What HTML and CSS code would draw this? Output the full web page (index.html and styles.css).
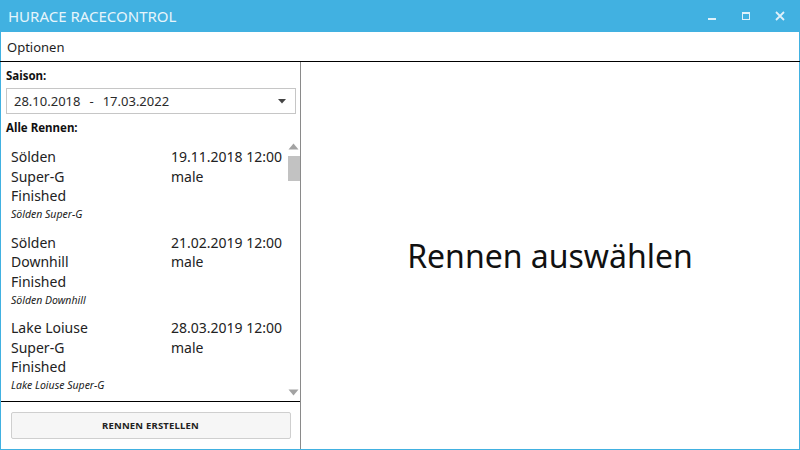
FILE: index.html
```html
<!DOCTYPE html>
<html>
<head>
<meta charset="utf-8">
<link rel="stylesheet" href="styles.css">
</head>
<body>
<div class="window">
  <div class="titlebar">
    <span class="title">HURACE RACECONTROL</span>
    <div class="controls">
      <svg class="ctl" width="10" height="10" viewBox="0 0 10 10"><rect x="1" y="7" width="8" height="2" fill="#dff1fa"/></svg>
      <svg class="ctl" width="10" height="10" viewBox="0 0 10 10"><rect x="1.5" y="1.5" width="7" height="7" fill="none" stroke="#dff1fa" stroke-width="1"/><rect x="1" y="1" width="8" height="2" fill="#dff1fa"/></svg>
      <svg class="ctl" width="10" height="10" viewBox="0 0 10 10"><path d="M1 1 L9 9 M9 1 L1 9" stroke="#dff1fa" stroke-width="1.8"/></svg>
    </div>
  </div>
  <div class="menubar"><span class="menuitem">Optionen</span></div>
  <div class="main">
    <div class="left">
      <div class="filters">
        <div class="label">Saison:</div>
        <div class="combo">
          <span class="range"><span>28.10.2018</span><span class="dash">-</span><span>17.03.2022</span></span>
          <svg width="8" height="5" viewBox="0 0 8 5"><path d="M0 0 L8 0 L4 4.5 Z" fill="#444"/></svg>
        </div>
        <div class="label label2">Alle Rennen:</div>
      </div>
      <div class="listarea">
        <div class="items">
          <div class="item">
            <div class="row"><span class="c1">Sölden</span><span class="c2">19.11.2018 12:00</span></div>
            <div class="row"><span class="c1">Super-G</span><span class="c2">male</span></div>
            <div class="row"><span class="c1">Finished</span></div>
            <div class="desc">Sölden Super-G</div>
          </div>
          <div class="item">
            <div class="row"><span class="c1">Sölden</span><span class="c2">21.02.2019 12:00</span></div>
            <div class="row"><span class="c1">Downhill</span><span class="c2">male</span></div>
            <div class="row"><span class="c1">Finished</span></div>
            <div class="desc">Sölden Downhill</div>
          </div>
          <div class="item">
            <div class="row"><span class="c1">Lake Loiuse</span><span class="c2">28.03.2019 12:00</span></div>
            <div class="row"><span class="c1">Super-G</span><span class="c2">male</span></div>
            <div class="row"><span class="c1">Finished</span></div>
            <div class="desc">Lake Loiuse Super-G</div>
          </div>
        </div>
        <div class="scrollbar">
          <svg class="arrow" width="13" height="9" viewBox="0 0 13 9"><path d="M1.5 7.5 L11.5 7.5 L6.5 1.5 Z" fill="#a3a3a3"/></svg>
          <div class="track"><div class="thumb"></div></div>
          <svg class="arrow" width="13" height="9" viewBox="0 0 13 9"><path d="M1.5 1.5 L11.5 1.5 L6.5 7.5 Z" fill="#a3a3a3"/></svg>
        </div>
      </div>
      <div class="footer">
        <div class="button">RENNEN ERSTELLEN</div>
      </div>
    </div>
    <div class="right">
      <div class="placeholder">Rennen auswählen</div>
    </div>
  </div>
</div>
</body>
</html>
```
FILE: styles.css
```css
html, body {
  margin: 0;
  padding: 0;
}
body {
  width: 800px;
  height: 450px;
  overflow: hidden;
  font-family: "Noto Sans", "Open Sans", sans-serif;
  color: #1e1e1e;
  background: #fff;
}
.window {
  box-sizing: border-box;
  width: 800px;
  height: 450px;
  border: 1px solid #41b1e1;
  border-top: none;
  display: flex;
  flex-direction: column;
}
.titlebar {
  height: 32px;
  background: #41b1e1;
  margin: 0 -1px;
  display: flex;
  align-items: center;
  justify-content: space-between;
  padding: 0 0 0 8px;
}
.title {
  color: #e6f5fb;
  font-size: 15px;
}
.controls {
  display: flex;
  align-items: center;
  height: 32px;
}
.ctl {
  margin-left: 24px;
}
.ctl:last-child {
  margin-right: 15px;
}
.menubar {
  height: 29px;
  border-bottom: 1px solid #000;
  display: flex;
  align-items: center;
  padding-left: 7px;
  margin: 0 -1px;
}
.menuitem {
  font-size: 13px;
  color: #1e1e1e;
}
.main {
  flex: 1;
  display: flex;
  min-height: 0;
}
.left {
  width: 299px;
  border-right: 1px solid #8a8a8a;
  display: flex;
  flex-direction: column;
}
.filters {
  padding: 5px 4px 0 5px;
}
.label {
  font-size: 11.5px;
  font-weight: bold;
  height: 17px;
  line-height: 17px;
  color: #111;
}
.label2 {
  margin-top: 5px;
}
.combo {
  box-sizing: border-box;
  margin-top: 4px;
  height: 26px;
  width: 290px;
  border: 1px solid #c6c6c6;
  display: flex;
  align-items: center;
  justify-content: space-between;
  padding: 0 9px 0 7px;
  font-size: 13px;
  color: #2a2a2a;
}
.range {
  display: flex;
}
.dash {
  margin: 0 9px;
}
.listarea {
  flex: 1;
  display: flex;
  border-bottom: 1px solid #000;
  min-height: 0;
  overflow: hidden;
}
.items {
  flex: 1;
  padding: 11px 0 0 10px;
}
.item {
  height: 85.5px;
}
.row {
  display: flex;
  height: 19.7px;
  line-height: 19.7px;
  font-size: 14px;
  color: #222;
}
.c1 {
  width: 160px;
}
.desc {
  font-size: 10.5px;
  font-style: italic;
  line-height: 16px;
  color: #222;
}
.scrollbar {
  width: 13px;
  display: flex;
  flex-direction: column;
  padding: 6px 0 4px;
}
.arrow {
  display: block;
}
.track {
  flex: 1;
  padding-top: 5px;
}
.thumb {
  width: 12px;
  margin-left: 1px;
  height: 25px;
  background: #c2c2c2;
}
.footer {
  height: 47px;
  display: flex;
  align-items: center;
  justify-content: center;
}
.button {
  box-sizing: border-box;
  width: 280px;
  height: 27px;
  border: 1px solid #cfcfcf;
  border-radius: 2px;
  background: #f6f6f6;
  display: flex;
  align-items: center;
  justify-content: center;
  font-size: 9.5px;
  font-weight: bold;
  color: #222;
  letter-spacing: 0.2px;
}
.right {
  flex: 1;
  display: flex;
  align-items: center;
  justify-content: center;
}
.placeholder {
  font-size: 32px;
  color: #111;
}
```
